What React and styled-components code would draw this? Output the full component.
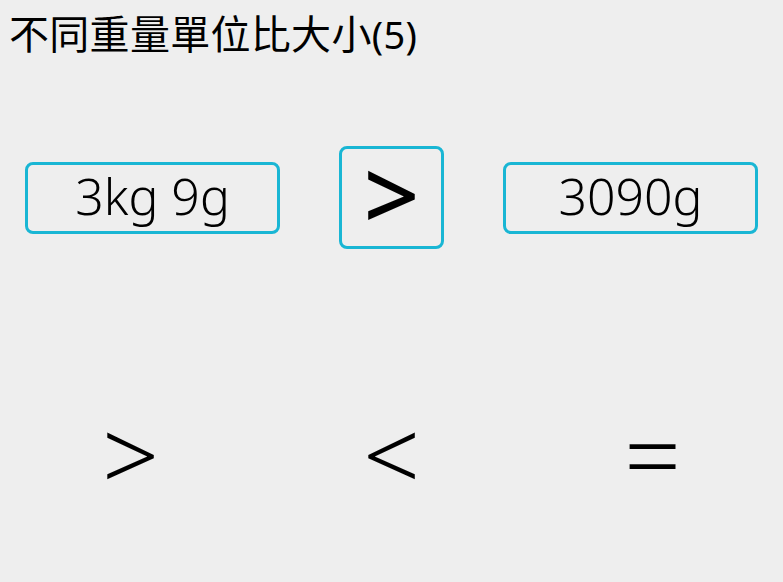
import React from 'react';
import styled, { createGlobalStyle } from 'styled-components';

const Global = createGlobalStyle`
  html, body {
    margin: 0;
    padding: 0;
    background: #eeeeee;
  }
  body {
    font-family: "Noto Sans", "Noto Sans CJK TC", sans-serif;
    color: #000;
  }
`;

const Page = styled.div`
  width: 783px;
  height: 582px;
  display: flex;
  flex-direction: column;
  background: #eeeeee;
  overflow: hidden;
`;

const Title = styled.h1`
  margin: 0;
  padding: 9px 0 0 9px;
  font-size: 40px;
  font-weight: 400;
  letter-spacing: 0.3px;
  line-height: 50px;
  font-family: "Noto Sans", "Noto Sans CJK TC", sans-serif;
`;

const Num = styled.span`
  font-size: 38px;
`;

const Compare = styled.div`
  margin-top: 87px;
  display: flex;
  align-items: center;
  justify-content: center;
  gap: 59px;
`;

const ValueBox = styled.div`
  box-sizing: border-box;
  width: 255px;
  height: 72px;
  border: 3px solid #19b6d4;
  border-radius: 8px;
  display: flex;
  align-items: center;
  justify-content: center;
  font-size: 50px;
  font-weight: 300;
  line-height: 1;
  padding-bottom: 4px;
`;

const AnswerBox = styled.div`
  box-sizing: border-box;
  width: 105px;
  height: 103px;
  border: 3px solid #19b6d4;
  border-radius: 8px;
  display: flex;
  align-items: center;
  justify-content: center;
  font-size: 98px;
  font-weight: 500;
  line-height: 1;
  padding-bottom: 10px;
`;

const Options = styled.div`
  margin-top: 154px;
  display: grid;
  grid-template-columns: repeat(3, 1fr);
`;

const Option = styled.button`
  background: none;
  border: none;
  padding: 0;
  font-family: "Noto Sans", sans-serif;
  font-size: 100px;
  font-weight: 300;
  line-height: 1;
  color: #000;
  text-align: center;
  cursor: pointer;
`;

export default function App() {
  return (
    <Page>
      <Global />
      <Title>不同重量單位比大小<Num>(5)</Num></Title>
      <Compare>
        <ValueBox>3kg 9g</ValueBox>
        <AnswerBox>&gt;</AnswerBox>
        <ValueBox>3090g</ValueBox>
      </Compare>
      <Options>
        <Option>&gt;</Option>
        <Option>&lt;</Option>
        <Option>=</Option>
      </Options>
    </Page>
  );
}
